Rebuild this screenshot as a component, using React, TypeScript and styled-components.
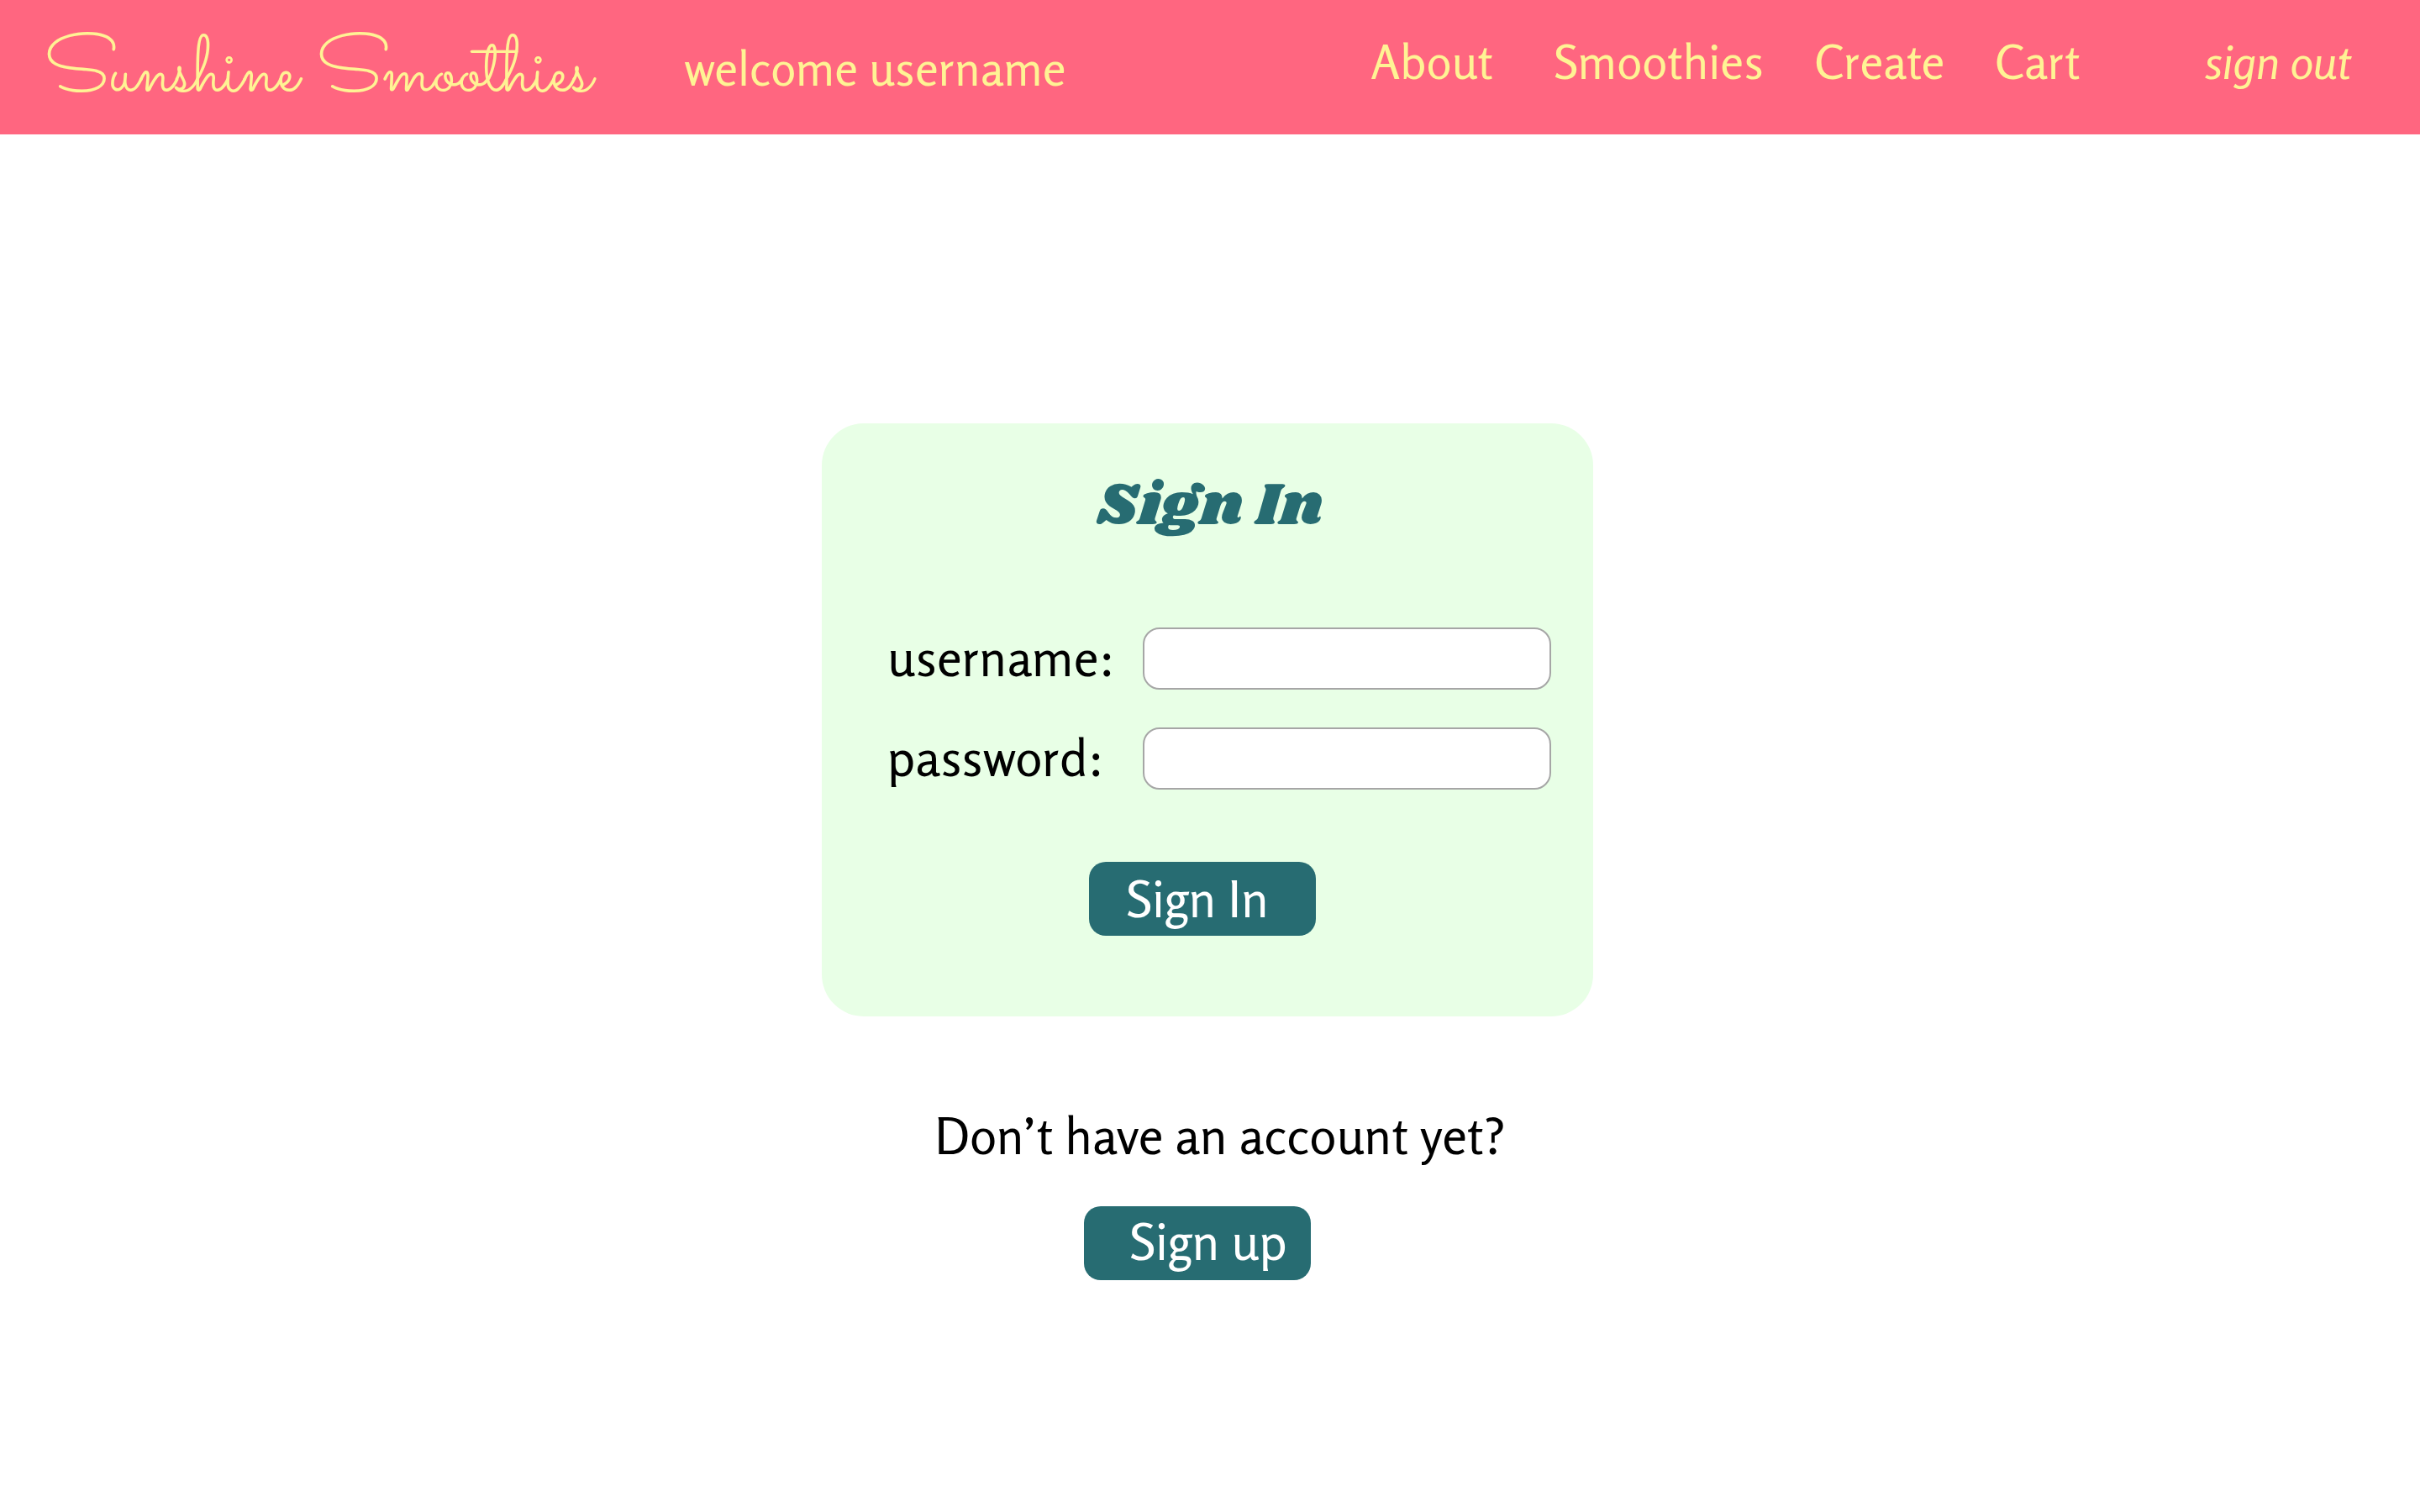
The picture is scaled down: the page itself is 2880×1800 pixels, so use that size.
import React from "react";
import styled, { createGlobalStyle } from "styled-components";

const color = {
  pink: "#ff6680",
  cream: "#fff394",
  mint: "#e8ffe6",
  teal: "#276c72",
  outline: "#a6a6a6",
};

const GlobalStyle = createGlobalStyle`
  *, *::before, *::after {
    box-sizing: border-box;
  }
  body {
    margin: 0;
    background: #ffffff;
    color: #000000;
    font-family: Rosario, Lato, "Noto Sans", sans-serif;
    font-size: 60px;
    line-height: 72px;
  }
`;

const Header = styled.header`
  display: flex;
  align-items: center;
  min-height: 160px;
  padding: 0 82px 0 52px;
  background: ${color.pink};
  color: ${color.cream};
  font-size: 56px;
  white-space: nowrap;
`;

const Logo = styled.a`
  padding-top: 18px;
  color: inherit;
  font-family: Sacramento, Lato, cursive;
  font-size: 96px;
  font-weight: 400;
  line-height: 140px;
  text-decoration: none;
`;

const Welcome = styled.p`
  margin: 0 0 0 110px;
  padding-top: 2px;
`;

const Nav = styled.nav`
  display: flex;
  gap: 60px;
  margin-left: auto;
  padding-bottom: 14px;
`;

const NavLink = styled.a<{ $before?: number; $after?: number; $italic?: boolean }>`
  margin: 0 ${(p) => p.$after ?? 0}px 0 ${(p) => p.$before ?? 0}px;
  color: inherit;
  font-style: ${(p) => (p.$italic ? "italic" : "normal")};
  text-decoration: none;
`;

const Main = styled.main`
  display: flex;
  flex-direction: column;
  align-items: center;
  padding: 344px 6px 48px 0;
`;

const Card = styled.form`
  display: flex;
  flex-direction: column;
  align-items: center;
  width: 100%;
  max-width: 918px;
  padding: 59px 50px 96px 78px;
  border-radius: 50px;
  background: ${color.mint};
`;

const Title = styled.h1`
  margin: 0 0 104px;
  padding-right: 22px;
  color: ${color.teal};
  font-family: Shrikhand, "DejaVu Serif", serif;
  font-size: 72px;
  font-weight: 400;
  line-height: 80px;
`;

const Fields = styled.div`
  display: flex;
  flex-direction: column;
  gap: 45px;
  width: 100%;
  margin-bottom: 86px;
`;

const Field = styled.div`
  display: grid;
  grid-template-columns: 304px 1fr;
  align-items: center;
`;

const Label = styled.label`
  padding-bottom: 2px;
`;

const TextInput = styled.input`
  width: 100%;
  height: 74px;
  padding: 0 20px;
  border: 2px solid ${color.outline};
  border-radius: 20px;
  background: #ffffff;
  font: inherit;
`;

const Button = styled.button<{ $left: number; $shift: number; $lift?: number }>`
  width: 270px;
  height: 88px;
  margin-right: ${(p) => p.$shift}px;
  padding: 0 0 ${(p) => p.$lift ?? 0}px ${(p) => p.$left}px;
  border: 0;
  border-radius: 20px;
  background: ${color.teal};
  color: #ffffff;
  font: inherit;
  text-align: left;
  cursor: pointer;
`;

const Prompt = styled.p`
  margin: 106px 0 48px;
  padding-left: 30px;
`;

export default function App() {
  return (
    <>
      <GlobalStyle />
      <Header>
        <Logo href="#home">Sunshine Smoothies</Logo>
        <Welcome>welcome username</Welcome>
        <Nav>
          <NavLink href="#about" $after={12}>About</NavLink>
          <NavLink href="#smoothies">Smoothies</NavLink>
          <NavLink href="#create">Create</NavLink>
          <NavLink href="#cart">Cart</NavLink>
          <NavLink href="#sign-out" $before={88} $italic>sign out</NavLink>
        </Nav>
      </Header>
      <Main>
        <Card onSubmit={(event) => event.preventDefault()}>
          <Title>Sign In</Title>
          <Fields>
            <Field>
              <Label htmlFor="username">username:</Label>
              <TextInput id="username" type="text" autoComplete="username" />
            </Field>
            <Field>
              <Label htmlFor="password">password:</Label>
              <TextInput id="password" type="password" autoComplete="current-password" />
            </Field>
          </Fields>
          <Button type="submit" $left={44} $shift={40}>Sign In</Button>
        </Card>
        <Prompt>Don’t have an account yet?</Prompt>
        <Button type="button" $left={54} $shift={24} $lift={4}>Sign up</Button>
      </Main>
    </>
  );
}
